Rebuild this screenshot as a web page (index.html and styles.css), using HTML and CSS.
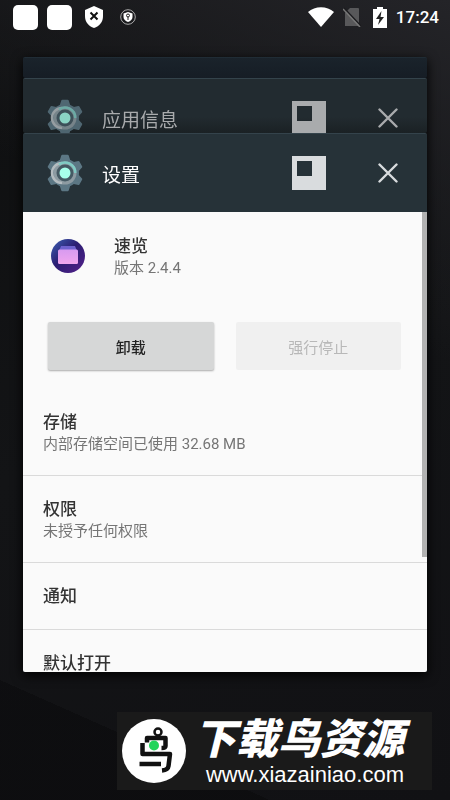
FILE: index.html
```html
<!doctype html>
<html lang="zh-CN">
  <head>
    <title>设置</title>
    <meta charset="utf-8">
    <meta name="viewport" content="width=device-width, initial-scale=1">
    <link rel="stylesheet" href="styles.css">
  </head>
  <body>
    <svg width="0" height="0" class="defs" aria-hidden="true">
      <symbol id="gear" viewBox="0 0 36 38">
        <g fill="#5c7784">
          <circle cx="18" cy="19" r="14"/>
          <path id="teeth" d="M12.500 7L14.300 1.500q.2-.7 1-.7h5.400q.8 0 1 .7L23.500 7v24l-1.800 5.500q-.2.700-1 .7h-5.400q-.8 0-1-.7L12.500 31z"/>
          <use href="#teeth" transform="rotate(60 18 19)"/>
          <use href="#teeth" transform="rotate(120 18 19)"/>
        </g>
        <circle cx="18" cy="19" r="11.500" fill="#8d9ba2"/>
        <path fill="none" stroke="#b4bcc0" stroke-width="2.500" d="M15 29a10 10 0 0 1 0-20"/>
        <path fill="none" stroke="#80cbc4" stroke-width="2.500" d="M12 10.500A10.200 10.200 0 0 1 28.200 19"/>
        <circle cx="18" cy="19" r="8.500" fill="#455a64"/>
        <circle cx="18" cy="19" r="5.500" fill="#a7ffeb"/>
      </symbol>
      <symbol id="pin" viewBox="0 0 34 34">
        <path fill="currentColor" fill-rule="evenodd" d="M0 0h34v34H0zM5 5v15h15V5z"/>
      </symbol>
      <symbol id="close" viewBox="0 0 20 20">
        <path fill="none" stroke="currentColor" stroke-width="2.400" stroke-linecap="round" d="M1.500 1.500l17 17M18.500 1.500l-17 17"/>
      </symbol>
    </svg>

    <div class="status">
      <span class="blank"></span>
      <span class="blank"></span>
      <svg class="shield" width="18" height="22" viewBox="0 0 18 22">
        <path fill="#fff" d="M9 0l9 4v6c0 6-3.500 10-9 12C3.500 20 0 16 0 10V4z"/>
        <path stroke="#111" stroke-width="2" d="M5.500 6.500l7 7M12.500 6.500l-7 7"/>
      </svg>
      <svg class="lock" width="16" height="16" viewBox="0 0 16 16">
        <circle cx="8" cy="8" r="7.300" fill="none" stroke="#aaa"/>
        <path fill="#fff" d="M8 3l4.500 1.500V8c0 2.500-2 4-4.500 5-2.500-1-4.500-2.500-4.500-5V4.500z"/>
        <path fill="none" stroke="#222" d="M8 11V7.500M6.500 6.500a1.500 1.500 0 1 1 3 0 1.500 1.500 0 1 1-3 0"/>
      </svg>
      <svg class="wifi" width="26" height="20" viewBox="0 0 26 20">
        <path fill="#fff" d="M0 5C7-1.500 19-1.500 26 5L13 20z"/>
      </svg>
      <svg class="sim" width="18" height="20" viewBox="0 0 18 20">
        <path fill="#58585a" d="M7 1h8q1 0 1 1v17H2V6z"/>
        <path stroke="#1b1b1e" stroke-width="1.500" d="M1 1l17 18"/>
        <path stroke="#777" stroke-width="1.500" d="M0 2l17 18"/>
      </svg>
      <svg class="battery" width="14" height="21" viewBox="0 0 14 21">
        <path fill="#fff" d="M4 0h6v2h4v19H0V2h4z"/>
        <path fill="#222" d="M8.500 4L3 12h3.500L5 18l6-8H7.500z"/>
      </svg>
      <time class="time">17:24</time>
    </div>

    <main class="stack">
      <section class="card card-back"></section>
      <section class="card card-middle">
        <header class="bar">
          <svg class="gear"><use href="#gear"/></svg>
          <h2 class="name">应用信息</h2>
          <button class="tool" aria-label="固定"><svg width="34" height="34"><use href="#pin"/></svg></button>
          <button class="tool" aria-label="关闭"><svg width="20" height="20"><use href="#close"/></svg></button>
        </header>
      </section>
      <section class="card card-front">
        <header class="bar">
          <svg class="gear"><use href="#gear"/></svg>
          <h2 class="name">设置</h2>
          <button class="tool" aria-label="固定"><svg width="34" height="34"><use href="#pin"/></svg></button>
          <button class="tool" aria-label="关闭"><svg width="20" height="20"><use href="#close"/></svg></button>
        </header>
        <div class="content">
          <div class="app">
            <svg class="app-icon" width="34" height="34" viewBox="0 0 34 34">
              <defs>
                <linearGradient id="disc" x1="0" y1="0" x2="1" y2="1">
                  <stop offset="0" stop-color="#3c62b4"/>
                  <stop offset=".45" stop-color="#2b1d72"/>
                  <stop offset="1" stop-color="#54208a"/>
                </linearGradient>
                <linearGradient id="folder" x1="0" y1="0" x2="0" y2="1">
                  <stop offset="0" stop-color="#d79af0"/>
                  <stop offset="1" stop-color="#f0a6ee"/>
                </linearGradient>
              </defs>
              <circle cx="17" cy="17" r="17" fill="url(#disc)"/>
              <path fill="#6f62cf" d="M10 7h14l2 5H8z"/>
              <rect x="7" y="10.500" width="20" height="14.500" rx="1.500" fill="url(#folder)"/>
            </svg>
            <div>
              <h3 class="title">速览</h3>
              <p class="detail">版本 2.4.4</p>
            </div>
          </div>
          <div class="actions">
            <button class="action">卸载</button>
            <button class="action" disabled>强行停止</button>
          </div>
          <ul class="list">
            <li class="item">
              <h3 class="title">存储</h3>
              <p class="detail">内部存储空间已使用 32.68 MB</p>
            </li>
            <li class="item">
              <h3 class="title">权限</h3>
              <p class="detail">未授予任何权限</p>
            </li>
            <li class="item">
              <h3 class="title">通知</h3>
            </li>
            <li class="item">
              <h3 class="title">默认打开</h3>
            </li>
          </ul>
          <div class="scrollbar"></div>
        </div>
      </section>
    </main>

    <footer class="banner">
      <svg class="logo" width="64" height="64" viewBox="0 0 64 64">
        <circle cx="32" cy="32" r="32" fill="#fff"/>
        <g fill="none" stroke="#111" stroke-width="4.500" stroke-linejoin="round">
          <circle cx="36" cy="13" r="3.500" stroke-width="2.500"/>
          <path d="M25 23.500V19h18.500v8q0 2-4 2"/>
          <path d="M20.500 24v11H48l-1.500 12q-.5 4-6.500 4.500"/>
          <path d="M17.500 45H39"/>
        </g>
        <circle cx="32" cy="26.500" r="5" fill="#22d45b"/>
      </svg>
      <div class="brand">
        <strong class="brand-name">下载鸟资源</strong>
        <span class="brand-url">www.xiazainiao.com</span>
      </div>
    </footer>
  </body>
</html>
```
FILE: styles.css
```css
* {
  box-sizing: border-box;
}
body {
  display: flex;
  flex-direction: column;
  height: 100vh;
  margin: 0;
  overflow: hidden;
  font-family: Roboto, "Noto Sans CJK SC", sans-serif;
  color: #333;
  background:
    linear-gradient(24deg, rgba(0, 0, 0, .25) 12%, transparent 12%),
    linear-gradient(205deg, #242428, transparent 36%),
    linear-gradient(160deg, #0e0f10, #131416 50%, #111114);
}
h2, h3, p, ul {
  margin: 0;
  padding: 0;
  font-weight: normal;
}
button {
  padding: 0;
  border: 0;
  font: inherit;
}
svg {
  display: block;
  flex: none;
}
.defs {
  position: absolute;
}

.status {
  display: flex;
  align-items: center;
  height: 34px;
  padding: 0 11px 0 13px;
  color: white;
}
.blank {
  width: 25px;
  height: 25px;
  margin-right: 9px;
  border-radius: 5px;
  background: white;
}
.shield {
  margin-left: 4px;
}
.lock {
  margin-left: 17px;
}
.wifi {
  margin-left: auto;
}
.sim {
  margin-left: 9px;
}
.battery {
  margin-left: 12px;
}
.time {
  margin-left: 9px;
  font-size: 17px;
  font-weight: 500;
}

.stack {
  display: flex;
  flex: 1;
  flex-direction: column;
  min-height: 0;
  margin: 23px 23px 0;
  filter: drop-shadow(0 3px 6px black);
}
.card {
  overflow: hidden;
  border-top: 1px solid #34434b;
  border-radius: 2px;
}
.card-back {
  height: 21px;
  border-color: #202c35;
  background: linear-gradient(#1a232b, #161d25);
}
.card-middle {
  height: 55px;
  color: #a9abad;
  background: linear-gradient(#222b30 70%, #1a2124);
}
.card-middle .gear {
  opacity: .8;
}
.card-front {
  display: flex;
  flex: 1;
  flex-direction: column;
  min-height: 0;
  color: #d9dcde;
  background: #263238;
}
.bar {
  display: flex;
  flex: none;
  align-items: center;
  height: 78px;
  padding: 0 29px 0 24px;
}
.gear {
  width: 36px;
  height: 38px;
}
.name {
  flex: 1;
  margin-left: 19px;
  font-size: 19px;
}
.card-front .name {
  color: white;
}
.tool {
  color: inherit;
  background: none;
}
.tool + .tool {
  margin-left: 52px;
}

.content {
  position: relative;
  flex: 1;
  min-height: 0;
  overflow: hidden;
  color: #333;
  background: #fafafa;
}
.app {
  display: flex;
  align-items: center;
  gap: 29px;
  padding: 22px 28px 0;
}
.title {
  font-size: 17px;
  font-weight: 500;
  line-height: 24px;
}
.detail {
  font-size: 15px;
  line-height: 20px;
  color: #757575;
}
.actions {
  display: flex;
  gap: 22px;
  padding: 44px 26px 19px 25px;
}
.action {
  flex: 1;
  height: 48px;
  border-radius: 2px;
  font-size: 15px;
  font-weight: 500;
  color: #222;
  background: #d6d7d7;
  box-shadow: 0 1px 2px #aaa;
}
.action:disabled {
  font-weight: normal;
  color: #b8b8b8;
  background: #f0f0f0;
  box-shadow: none;
}
.list {
  list-style: none;
}
.item {
  padding: 21px 20px;
  border-bottom: 1px solid #dadada;
}
.scrollbar {
  position: absolute;
  top: 0;
  right: 0;
  width: 5px;
  height: 75%;
  background: #b2b2b2;
}

.banner {
  display: flex;
  align-items: center;
  align-self: flex-end;
  gap: 8px;
  height: 78px;
  margin: 40px 18px 10px 0;
  padding: 0 28px 0 5px;
  color: white;
  background: #1a1a1a;
}
.brand {
  display: flex;
  flex-direction: column;
  align-items: flex-end;
  padding-top: 4px;
}
.brand-name {
  font-size: 42px;
  font-style: italic;
  font-weight: 900;
  line-height: 44px;
}
.brand-url {
  font-family: "Liberation Sans", sans-serif;
  font-size: 22px;
  line-height: 26px;
}
```
